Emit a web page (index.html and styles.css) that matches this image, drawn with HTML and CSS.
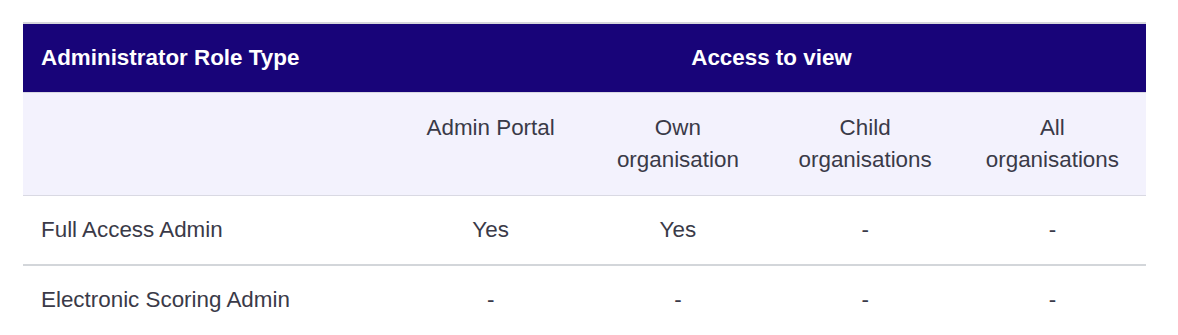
FILE: index.html
```html
<!DOCTYPE html>
<html lang="en">
<head>
<meta charset="utf-8">
<title>Administrator roles</title>
<link rel="stylesheet" href="styles.css">
</head>
<body>
<div class="wrap">
<table class="roles">
  <colgroup>
    <col class="c-role">
    <col class="c-acc"><col class="c-acc"><col class="c-acc"><col class="c-acc">
  </colgroup>
  <thead>
    <tr class="head">
      <th class="left">Administrator Role Type</th>
      <th colspan="4">Access to view</th>
    </tr>
    <tr class="sub">
      <th></th>
      <th>Admin Portal</th>
      <th>Own<br>organisation</th>
      <th>Child<br>organisations</th>
      <th>All<br>organisations</th>
    </tr>
  </thead>
  <tbody>
    <tr class="first">
      <td class="left">Full Access Admin</td>
      <td>Yes</td>
      <td>Yes</td>
      <td>-</td>
      <td>-</td>
    </tr>
    <tr>
      <td class="left">Electronic Scoring Admin</td>
      <td>-</td>
      <td>-</td>
      <td>-</td>
      <td>-</td>
    </tr>
  </tbody>
</table>
</div>
</body>
</html>
```

FILE: styles.css
```css
html, body {
  margin: 0;
  padding: 0;
  background: #ffffff;
}
.wrap {
  padding: 22px 32px 0 23px;
}
.roles {
  width: 1123px;
  border-collapse: collapse;
  table-layout: fixed;
  font-family: "Liberation Sans", Arial, sans-serif;
  font-size: 22.4px;
  line-height: 32px;
  color: #3a3a48;
}
.c-role { width: 374px; }
.roles th, .roles td {
  padding: 18px 18px;
  text-align: center;
  vertical-align: top;
}
.roles .left {
  text-align: left;
}
.head {
  background: #180479;
  border-top: 2px solid #d6d6dc;
  border-bottom: 1px solid #d8d8e2;
}
.head th {
  color: #ffffff;
  font-weight: bold;
}
.sub {
  background: #f3f2fd;
  border-bottom: 1px solid #d9d9e3;
}
.sub th {
  font-weight: normal;
  padding-top: 19px;
  padding-bottom: 19px;
}
.first {
  border-bottom: 2px solid #d3d6da;
}
```
